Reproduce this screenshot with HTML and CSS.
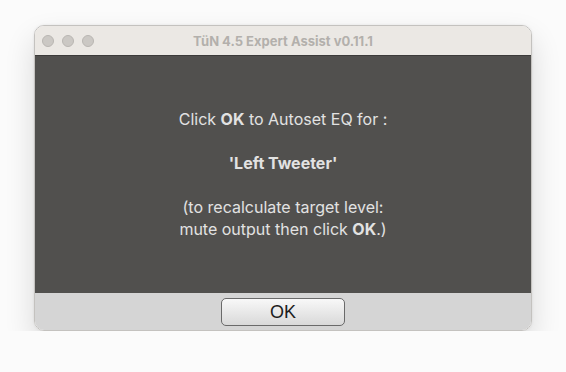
FILE: index.html
```html
<!DOCTYPE html>
<html lang="en">
<head>
    <meta charset="UTF-8">
    <title>TüN 4.5 Expert Assist v0.11.1</title>
    <link rel="stylesheet" href="styles.css">
</head>
<body>
    <div class="window">
        <div class="titlebar">
            <div class="lights">
                <span class="light"></span>
                <span class="light"></span>
                <span class="light"></span>
            </div>
            <div class="title">TüN 4.5 Expert Assist v0.11.1</div>
        </div>

        <div class="content">
            <p>Click <b>OK</b> to Autoset EQ for :</p>
            <p class="target"><b>'Left Tweeter'</b></p>
            <p>(to recalculate target level:<br>mute output then click <b>OK</b>.)</p>
        </div>

        <div class="footer">
            <button class="ok-btn">OK</button>
        </div>
    </div>
</body>
</html>
```

FILE: styles.css
```css
body {
    margin: 0;
    background-color: #fbfbfb;
    font-family: Inter, "Noto Sans", sans-serif;
}

.window {
    width: 498px;
    margin: 25px 0 0 34px;
    border-radius: 10px;
    overflow: hidden;
    border: 1px solid #c4c2bf;
    box-sizing: border-box;
    box-shadow: 0 14px 30px rgba(0, 0, 0, 0.14), 0 0 3px rgba(0, 0, 0, 0.08);
}

.titlebar {
    height: 29px;
    background-color: #ebe8e4;
    border-bottom: 1px solid #3c3b3a;
    display: flex;
    align-items: center;
    position: relative;
}

.lights {
    display: flex;
    gap: 8px;
    padding-left: 7px;
}

.light {
    width: 12px;
    height: 12px;
    border-radius: 50%;
    background-color: #cbc8c4;
    border: 1px solid #b9b6b2;
    box-sizing: border-box;
}

.title {
    position: absolute;
    left: 0;
    right: 0;
    text-align: center;
    font-size: 13px;
    font-weight: 700;
    color: #b3b0ac;
    pointer-events: none;
}

.content {
    height: 237px;
    background-color: #51504e;
    color: #e2e2e2;
    text-align: center;
    font-size: 16px;
    line-height: 22px;
    padding-top: 52px;
    box-sizing: border-box;
}

.content p {
    margin: 0 0 22px 0;
}

.content b {
    font-weight: 700;
}

.footer {
    height: 37px;
    background-color: #d5d5d5;
    display: flex;
    justify-content: center;
    padding-top: 5px;
    box-sizing: border-box;
}

.ok-btn {
    width: 124px;
    height: 28px;
    border: 1px solid #6a6a6a;
    border-radius: 5px;
    background: linear-gradient(#f8f8f8, #d9d9d9);
    font-family: "Liberation Sans", Arial, sans-serif;
    font-size: 18px;
    color: #1c1c1c;
    padding: 0;
    cursor: pointer;
}
```
